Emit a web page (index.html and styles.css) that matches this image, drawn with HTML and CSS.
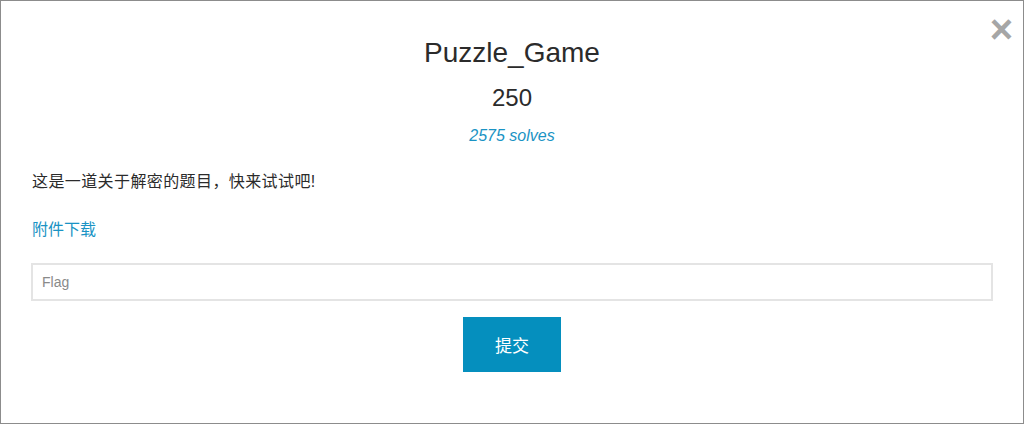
FILE: index.html
```html
<!DOCTYPE html>
<html lang="zh">
<head>
<meta charset="utf-8">
<title>Puzzle_Game</title>
<link rel="stylesheet" href="styles.css">
</head>
<body>
<div class="modal">
  <button class="close" type="button" aria-label="Close">×</button>
  <h1 class="title">Puzzle_Game</h1>
  <div class="value">250</div>
  <div class="solves">2575 solves</div>
  <p class="desc">这是一道关于解密的题目，快来试试吧!</p>
  <a class="attach" href="#">附件下载</a>
  <form class="flag-form">
    <input class="flag-input" type="text" placeholder="Flag">
    <div class="submit-row">
      <button class="submit" type="button">提交</button>
    </div>
  </form>
</div>
</body>
</html>
```
FILE: styles.css
```css
* { box-sizing: border-box; }
html, body { margin: 0; padding: 0; background: #fff; }
body {
  font-family: "Liberation Sans", Arial, "Noto Sans CJK SC", sans-serif;
  color: #333;
}
.modal {
  position: relative;
  width: 1024px;
  height: 424px;
  border: 1px solid #8c8c8c;
  padding: 0 30px;
  display: flex;
  flex-direction: column;
}
.close {
  position: absolute;
  top: 10px;
  right: 10px;
  border: 0;
  background: none;
  padding: 0;
  font-family: "Liberation Sans", Arial, sans-serif;
  font-weight: 700;
  font-size: 40px;
  line-height: 36px;
  color: #a6a6a6;
  cursor: pointer;
}
.title {
  margin: 36px 0 0;
  font-size: 28px;
  font-weight: 400;
  line-height: 32px;
  text-align: center;
  color: #2b2b2b;
}
.value {
  margin-top: 14px;
  font-size: 24px;
  line-height: 30px;
  text-align: center;
  color: #2b2b2b;
}
.solves {
  margin-top: 13px;
  font-size: 16px;
  line-height: 20px;
  font-style: italic;
  text-align: center;
  color: #1a93c4;
}
.desc {
  margin: 24px 0 0 1px;
  font-size: 16px;
  line-height: 24px;
  letter-spacing: 0.4px;
  color: #2b2b2b;
}
.attach {
  margin: 24px 0 0 1px;
  font-size: 16px;
  line-height: 24px;
  color: #1a93c4;
  text-decoration: none;
  align-self: flex-start;
}
.flag-form {
  margin-top: 21px;
  display: flex;
  flex-direction: column;
}
.flag-input {
  width: 100%;
  height: 38px;
  border: 2px solid #e4e4e4;
  padding: 0 9px;
  font-family: "Liberation Sans", Arial, sans-serif;
  font-size: 14px;
  color: #333;
  outline: none;
}
.flag-input::placeholder { color: #8a8a8a; }
.submit-row {
  margin-top: 16px;
  display: flex;
  justify-content: center;
}
.submit {
  width: 98px;
  height: 55px;
  border: 0;
  background: #058fbe;
  color: #fff;
  font-family: "Liberation Sans", Arial, "Noto Sans CJK SC", sans-serif;
  font-size: 17px;
  cursor: pointer;
}
```
